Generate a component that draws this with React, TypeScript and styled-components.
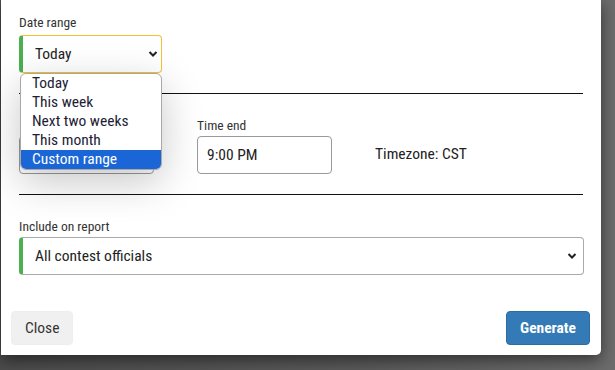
import React from "react";
import styled, { createGlobalStyle } from "styled-components";

const GlobalStyle = createGlobalStyle`
  html, body { margin: 0; padding: 0; }
  body {
    background: #5a5a5a;
    font-family: "Roboto Condensed", "Roboto", sans-serif;
    font-stretch: condensed;
    color: #333;
  }
  * { box-sizing: border-box; }
`;

const Backdrop = styled.div`
  width: 615px;
  height: 370px;
  padding: 0 14px 15px 1px;
  background: linear-gradient(90deg, #4c4c4c 0%, #5a5a5a 60%, #6c6c6c 100%);
  overflow: hidden;
`;

const Modal = styled.div`
  position: relative;
  width: 600px;
  height: 355px;
  background: #fff;
  border-radius: 0 0 5px 0;
  box-shadow: 0 5px 15px rgba(0, 0, 0, 0.5);
  display: flex;
  flex-direction: column;
`;

const Body = styled.div`
  padding: 15px 18px 0 18px;
  flex: 1;
`;

const Section = styled.div<{ $top?: number }>`
  position: relative;
  display: flex;
  align-items: flex-end;
  gap: 43px;
  margin-top: ${(p) => p.$top ?? 0}px;
`;

const Field = styled.div<{ $gap?: number }>`
  display: flex;
  flex-direction: column;
  gap: ${(p) => p.$gap ?? 5}px;
`;

const Label = styled.label`
  font-size: 13.5px;
  line-height: 15px;
  min-height: 15px;
  color: #333;
`;

const SelectBox = styled.div<{ $focus?: boolean; $width: string; $padRight: number }>`
  position: relative;
  width: ${(p) => p.$width};
  height: 38px;
  border: 1px solid ${(p) => (p.$focus ? "#f2c230" : "#aaa")};
  border-left: 4px solid #4caf50;
  border-radius: 4px;
  display: flex;
  align-items: center;
  justify-content: space-between;
  padding: 0 ${(p) => p.$padRight}px 0 12px;
  font-size: 15.5px;
  color: #222;
  background: #fff;
`;

const Chevron = styled.svg`
  flex: none;
`;

const Divider = styled.hr`
  margin: 20px 0 0 0;
  border: 0;
  border-top: 1px solid #111;
  width: 564px;
`;

const TimeInput = styled.div`
  width: 135px;
  height: 38px;
  border: 1px solid #999;
  border-radius: 4px;
  display: flex;
  align-items: center;
  padding: 0 9px;
  font-size: 15.5px;
  color: #222;
`;

const Timezone = styled.div`
  font-size: 15.5px;
  color: #222;
  height: 38px;
  display: flex;
  align-items: center;
  padding-bottom: 3px;
`;

const Menu = styled.ul`
  position: absolute;
  top: 58px;
  left: 1px;
  width: 142px;
  margin: 0;
  padding: 0;
  list-style: none;
  background: #fff;
  border: 1px solid #a8a8a8;
  border-radius: 6px;
  box-shadow: 0 12px 40px rgba(0, 0, 0, 0.22);
  overflow: hidden;
  z-index: 5;
`;

const MenuItem = styled.li<{ $active?: boolean }>`
  height: 19px;
  line-height: 19px;
  padding-left: 11px;
  font-size: 15.5px;
  color: ${(p) => (p.$active ? "#fff" : "#1d1d35")};
  background: ${(p) => (p.$active ? "#1a66d6" : "transparent")};
`;

const Footer = styled.div`
  display: flex;
  justify-content: space-between;
  align-items: center;
  padding: 0 11px 10px 10px;
`;

const Button = styled.button<{ $primary?: boolean }>`
  height: 34px;
  padding: 0 13px;
  border-radius: 4px;
  border: 1px solid ${(p) => (p.$primary ? "#2e6da4" : "#eee")};
  background: ${(p) => (p.$primary ? "#337ab7" : "#f0f0f0")};
  color: ${(p) => (p.$primary ? "#fff" : "#333")};
  font-family: inherit;
  font-size: 15.5px;
  font-weight: ${(p) => (p.$primary ? 700 : 400)};
`;

const ChevronIcon = () => (
  <Chevron width="10" height="8" viewBox="0 0 10 8">
    <polyline points="1.5,2 5,5.5 8.5,2" fill="none" stroke="#222" strokeWidth="2" />
  </Chevron>
);

const options = ["Today", "This week", "Next two weeks", "This month", "Custom range"];

export default function App() {
  return (
    <>
      <GlobalStyle />
      <Backdrop>
        <Modal>
          <Body>
            <Section>
              <Field>
                <Label>Date range</Label>
                <SelectBox $focus $width="143px" $padRight={3}>
                  Today
                  <ChevronIcon />
                </SelectBox>
              </Field>
              <Menu>
                {options.map((o) => (
                  <MenuItem key={o} $active={o === "Custom range"}>
                    {o}
                  </MenuItem>
                ))}
              </Menu>
            </Section>
            <Divider />
            <Section $top={24}>
              <Field $gap={3}>
                <Label />
                <TimeInput />
              </Field>
              <Field $gap={3}>
                <Label>Time end</Label>
                <TimeInput>9:00 PM</TimeInput>
              </Field>
              <Timezone>Timezone: CST</Timezone>
            </Section>
            <Divider />
            <Section $top={24}>
              <Field $gap={3}>
                <Label>Include on report</Label>
                <SelectBox $width="565px" $padRight={6}>
                  All contest officials
                  <ChevronIcon />
                </SelectBox>
              </Field>
            </Section>
          </Body>
          <Footer>
            <Button>Close</Button>
            <Button $primary>Generate</Button>
          </Footer>
        </Modal>
      </Backdrop>
    </>
  );
}
